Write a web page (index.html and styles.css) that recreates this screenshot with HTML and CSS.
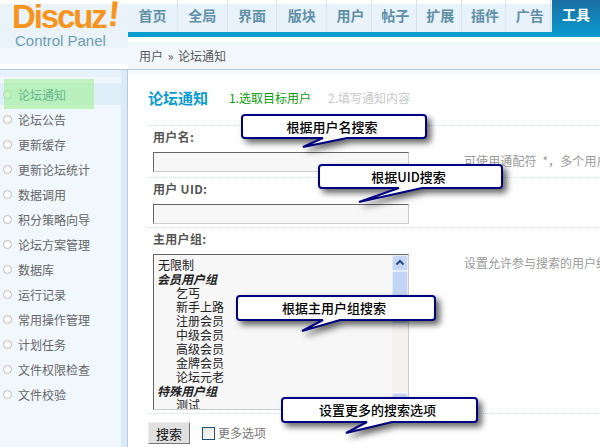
FILE: index.html
```html
<!DOCTYPE html>
<html lang="zh">
<head>
<meta charset="utf-8">
<title>论坛通知</title>
<link rel="stylesheet" href="styles.css">
</head>
<body>
<div class="app">
  <aside class="left">
    <div class="brand">
      <div class="logo">Discuz<span class="bang">!</span></div>
      <div class="panel-name">Control Panel</div>
    </div>
    <div class="side-wrap">
      <ul class="side">
        <li class="active">论坛通知</li>
        <li>论坛公告</li>
        <li>更新缓存</li>
        <li>更新论坛统计</li>
        <li>数据调用</li>
        <li>积分策略向导</li>
        <li>论坛方案管理</li>
        <li>数据库</li>
        <li>运行记录</li>
        <li>常用操作管理</li>
        <li>计划任务</li>
        <li>文件权限检查</li>
        <li>文件校验</li>
      </ul>
    </div>
  </aside>
  <div class="right">
    <nav class="nav">
      <a class="wide">首页</a><a class="wide">全局</a><a class="wide">界面</a><a class="wide">版块</a><a>用户</a><a>帖子</a><a>扩展</a><a>插件</a><a>广告</a><a class="current">工具</a>
    </nav>
    <div class="crumb">用户 » 论坛通知</div>
    <main class="main">
      <div class="title-row">
        <h1 class="title">论坛通知</h1>
        <span class="step on">1.选取目标用户</span>
        <span class="step off">2.填写通知内容</span>
      </div>
      <section class="row row-a">
        <div class="label">用户名:</div>
        <div class="field"><div class="input"></div><span class="hint hint-a">可使用通配符 *，多个用户名用半角逗号隔开</span></div>
      </section>
      <section class="row row-b">
        <div class="label">用户 UID:</div>
        <div class="field"><div class="input"></div></div>
      </section>
      <section class="row row-c">
        <div class="label">主用户组:</div>
        <div class="field">
          <div class="listbox">
            <div class="options">
              <div class="opt">无限制</div>
              <div class="group">会员用户组</div>
              <div class="sub">乞丐</div>
              <div class="sub">新手上路</div>
              <div class="sub">注册会员</div>
              <div class="sub">中级会员</div>
              <div class="sub">高级会员</div>
              <div class="sub">金牌会员</div>
              <div class="sub">论坛元老</div>
              <div class="group">特殊用户组</div>
              <div class="sub">测试</div>
            </div>
            <div class="scroll">
              <div class="sbtn"><svg width="14" height="14" viewBox="0 0 14 14"><path d="M3.5 8.5 L7 5 L10.5 8.5" fill="none" stroke="#2b4a7f" stroke-width="2"/></svg></div>
              <div class="thumb"></div>
              <div class="track"></div>
              <div class="sbtn"></div>
            </div>
          </div>
          <span class="hint hint-c">设置允许参与搜索的用户组，可以按住 CTRL 多选</span>
        </div>
      </section>
      <div class="actions">
        <div class="btn">搜索</div>
        <span class="check"></span>
        <span class="more">更多选项</span>
      </div>
    </main>
  </div>

  <div class="callout c1">
    <svg width="186" height="25" viewBox="0 0 186 25"><path d="M4 1 H182 Q185 1 185 4 V21 Q185 24 182 24 H106 L62 33 L82 24 H4 Q1 24 1 21 V4 Q1 1 4 1 Z"/></svg>
    <span>根据用户名搜索</span>
  </div>
  <div class="callout c2">
    <svg width="185" height="25" viewBox="0 0 185 25"><path d="M4 1 H181 Q184 1 184 4 V21 Q184 24 181 24 H104 L41 38 L81 24 H4 Q1 24 1 21 V4 Q1 1 4 1 Z"/></svg>
    <span>根据UID搜索</span>
  </div>
  <div class="callout c3">
    <svg width="200" height="26" viewBox="0 0 200 26"><path d="M4 1 H196 Q199 1 199 4 V22 Q199 25 196 25 H104 L66 36 L87 25 H4 Q1 25 1 22 V4 Q1 1 4 1 Z"/></svg>
    <span>根据主用户组搜索</span>
  </div>
  <div class="callout c4">
    <svg width="197" height="26" viewBox="0 0 197 26"><path d="M4 1 H193 Q196 1 196 4 V22 Q196 25 193 25 H111 L65 36 L86 25 H4 Q1 25 1 22 V4 Q1 1 4 1 Z"/></svg>
    <span>设置更多的搜索选项</span>
  </div>
</div>
</body>
</html>
```
FILE: styles.css
```css
* { box-sizing: border-box; }
html, body { margin: 0; padding: 0; background: #fff; }
body { font: 12px/14px "Noto Sans CJK SC", "Liberation Sans", sans-serif; color: #666; }

.app {
  position: relative;
  display: grid;
  grid-template-columns: 128px 472px;
  width: 600px;
  height: 447px;
  overflow: hidden;
}

/* left column */
.left { display: flex; flex-direction: column; min-height: 0; }
.brand {
  height: 70px;
  border-bottom: 1px solid #b5cbd8;
  background: linear-gradient(#fff 0 4px, #ebf3fa 4px 48px, #f2f8fc 48px 64px, #fff 64px);
}
.logo {
  height: 30px;
  padding-left: 12px;
  font: bold 33px/31px "Liberation Sans", sans-serif;
  letter-spacing: -2.1px;
  color: #f7941d;
}
.bang {
  display: inline-block;
  margin-left: 2px;
  font-size: 36px;
  transform: translateY(-2px) rotate(6deg);
}
.panel-name {
  padding: 2px 0 0 15px;
  font: 15px/18px "Liberation Sans", sans-serif;
  color: #6d9db2;
}
.side-wrap {
  flex: 1;
  border-right: 1px solid #b5cbd8;
  min-height: 0;
}
.side {
  height: 100%;
  margin: 0;
  padding: 13px 0 0;
  list-style: none;
  background: linear-gradient(#e8f2fa 0 7px, #f0f8fd 7px);
  border-right: 6px solid #dcebf9;
}
.side li {
  position: relative;
  height: 22px;
  margin-bottom: 3px;
  padding-left: 18px;
  line-height: 23px;
  color: #666;
}
.side li::before {
  content: "";
  position: absolute;
  left: 3px;
  top: 7px;
  width: 7px;
  height: 7px;
  border: 1px solid #bbb;
  border-radius: 50%;
  background: #fff;
}
.side li.active { background: #e0eefa; color: #005f7f; }
.side li.active::after {
  content: "";
  position: absolute;
  left: 4px;
  top: -4px;
  width: 90px;
  height: 30px;
  background: rgba(160, 240, 150, 0.6);
}

/* right column */
.right { display: flex; flex-direction: column; min-width: 0; }
.nav {
  display: flex;
  height: 37px;
  border-bottom: 5px solid #0a9bcf;
  background: linear-gradient(#fff 0 4px, #e8f2fa 4px);
}
.nav a {
  width: 45px;
  height: 32px;
  padding: 4px 0 0 3px;
  border-right: 1px solid #d3e2ec;
  text-align: center;
  font-size: 14px;
  font-weight: 700;
  line-height: 23px;
  color: #5f8fa6;
}
.nav a.wide { width: 50px; padding-left: 0; }
.nav a.current {
  width: 48px;
  height: 37px;
  margin-left: 1px;
  padding: 3px 0 0;
  border-right: 0;
  color: #fff;
  background: linear-gradient(#1a6fa3, #0a9bcf);
}
.crumb {
  height: 33px;
  padding: 5px 0 0 11px;
  line-height: 27px;
  word-spacing: 2px;
  border-bottom: 1px solid #b5cbd8;
  color: #555;
  background: linear-gradient(#fff 0 5px, #f1f7fb 5px);
}
.main {
  flex: 1;
  padding-left: 20px;
  background: linear-gradient(#f1f7fb, #fff 8px);
  overflow: hidden;
}
.title-row {
  display: flex;
  align-items: center;
  height: 55px;
  padding-top: 1px;
}
.title {
  width: 81px;
  margin: 0;
  font-size: 15px;
  font-weight: 700;
  line-height: 20px;
  color: #0a9bcf;
}
.step { width: 99px; font-size: 12px; }
.step.on { color: #0a9a0a; }
.step.off { color: #c8c8c8; }

.row {
  padding: 4px 0 0 5px;
  border-top: 1px dotted #cfe2ef;
}
.row-a { height: 52px; }
.row-b { height: 50px; }
.row-c { height: 186px; }
.label {
  height: 14px;
  font-weight: 700;
  color: #555;
  letter-spacing: 0.3px;
}
.field {
  display: flex;
  align-items: flex-start;
  margin-top: 8px;
  white-space: nowrap;
}
.input, .listbox {
  flex: none;
  width: 256px;
  border: 1px solid;
  border-color: #666 #ccc #ccc #666;
  background: #f7f7f7;
}
.input { height: 20px; }
.listbox { display: flex; height: 156px; }
.hint { margin-left: 55px; color: #999; }
.hint-a { margin-top: 2px; word-spacing: 3px; letter-spacing: 0.1px; }
.hint-c { margin-top: 2px; }

.options { flex: 1; overflow: hidden; padding: 3px 0 0 4px; color: #222; }
.group { margin-left: -1px; font-weight: 700; font-style: italic; color: #222; }
.sub { padding-left: 18px; }
.scroll { display: flex; flex-direction: column; flex: none; width: 16px; background: #f3f2ee; }
.sbtn { flex: none; height: 16px; background: #c5d7f5; border: 1px solid #e6eefb; border-radius: 2px; }
.sbtn svg { display: block; }
.thumb { flex: none; height: 53px; background: #c2d5f7; border: 1px solid #e6eefb; border-radius: 2px; }
.track { flex: 1; }

.actions {
  display: flex;
  align-items: center;
  height: 31px;
  padding-top: 8px;
  border-top: 1px dotted #cfe2ef;
}
.btn {
  width: 42px;
  height: 22px;
  border: 1px solid;
  border-color: #eee #777 #777 #eee;
  background: #e0e0e0;
  text-align: center;
  line-height: 21px;
  font-size: 13px;
  color: #111;
}
.check {
  width: 13px;
  height: 13px;
  margin-left: 12px;
  border: 1px solid #1c5180;
  background: linear-gradient(135deg, #e4e3dc, #fff);
}
.more { margin-left: 3px; color: #777; }

/* annotation balloons lying over the page */
.callout {
  position: absolute;
  display: grid;
  color: #000;
  font-size: 13px;
  font-weight: 500;
  line-height: 25px;
  text-align: center;
}
.callout > * { grid-area: 1 / 1; }
.callout span { position: relative; z-index: 1; padding-right: 4px; }
.callout svg {
  display: block;
  overflow: visible;
  filter: drop-shadow(4px 4px 3px rgba(0, 0, 0, 0.6));
}
.callout path { fill: #fff; stroke: #000080; stroke-width: 2; }
.c1 { left: 241px; top: 114px; }
.c2 { left: 318px; top: 164px; }
.c3 { left: 236px; top: 295px; }
.c4 { left: 281px; top: 397px; }
```
